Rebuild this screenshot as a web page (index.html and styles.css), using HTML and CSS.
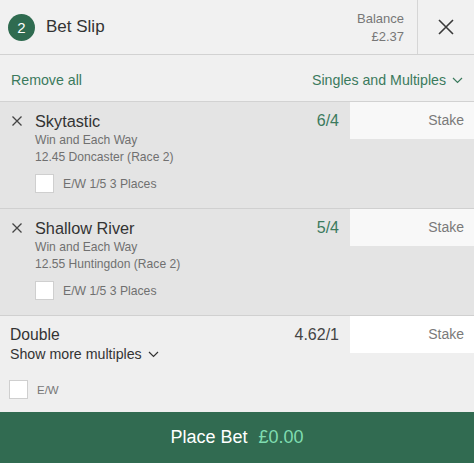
FILE: index.html
```html
<!DOCTYPE html>
<html lang="en">
<head>
  <meta charset="UTF-8">
  <title>Bet Slip</title>
  <meta name="viewport" content="width=device-width, initial-scale=1">
  <link rel="stylesheet" href="styles.css">
</head>
<body>
  <div class="slip">
    <div class="header">
      <div class="title">
        <span class="badge">2</span>
        <span class="title-text">Bet Slip</span>
      </div>
      <div class="balance">
        <span>Balance</span>
        <span>£2.37</span>
      </div>
      <div class="close">
        <svg width="16" height="16" viewBox="0 0 16 16"><path d="M1 1L15 15M15 1L1 15" stroke="#3a3a3a" stroke-width="1.6" fill="none"/></svg>
      </div>
    </div>

    <div class="toolbar">
      <span class="link">Remove all</span>
      <span class="link">Singles and Multiples
        <svg class="chev" width="11" height="7" viewBox="0 0 11 7"><path d="M1 1L5.5 5.5L10 1" stroke="currentColor" stroke-width="1.2" fill="none"/></svg>
      </span>
    </div>

    <div class="bet">
      <div class="remove">
        <svg width="10" height="10" viewBox="0 0 10 10"><path d="M0.5 0.5L9.5 9.5M9.5 0.5L0.5 9.5" stroke="#444" stroke-width="1.3" fill="none"/></svg>
      </div>
      <div class="info">
        <div class="name">Skytastic</div>
        <div class="sub">Win and Each Way</div>
        <div class="sub">12.45 Doncaster (Race 2)</div>
        <div class="ew"><span class="box"></span>E/W&nbsp;1/5&nbsp;3 Places</div>
      </div>
      <div class="odds green">6/4</div>
      <div class="stake">Stake</div>
    </div>

    <div class="bet">
      <div class="remove">
        <svg width="10" height="10" viewBox="0 0 10 10"><path d="M0.5 0.5L9.5 9.5M9.5 0.5L0.5 9.5" stroke="#444" stroke-width="1.3" fill="none"/></svg>
      </div>
      <div class="info">
        <div class="name">Shallow River</div>
        <div class="sub">Win and Each Way</div>
        <div class="sub">12.55 Huntingdon (Race 2)</div>
        <div class="ew"><span class="box"></span>E/W&nbsp;1/5&nbsp;3 Places</div>
      </div>
      <div class="odds green">5/4</div>
      <div class="stake">Stake</div>
    </div>

    <div class="multi">
      <div class="info">
        <div class="name">Double</div>
        <div class="more">Show more multiples
          <svg class="chev" width="11" height="7" viewBox="0 0 11 7"><path d="M1 1L5.5 5.5L10 1" stroke="currentColor" stroke-width="1.2" fill="none"/></svg>
        </div>
        <div class="ew small"><span class="box"></span>E/W</div>
      </div>
      <div class="odds">4.62/1</div>
      <div class="stake">Stake</div>
    </div>

    <div class="place">
      <span>Place Bet</span>
      <span class="amount">£0.00</span>
    </div>
  </div>
</body>
</html>
```

FILE: styles.css
```css
body {
  margin: 0;
  font-family: "Liberation Sans", Arial, sans-serif;
  background: #f0f0f0;
  color: #333;
  overflow: hidden;
}
.slip {
  width: 474px;
  height: 463px;
  display: flex;
  flex-direction: column;
}
.header {
  height: 54px;
  display: flex;
  align-items: stretch;
  background: #f1f1f1;
  border-bottom: 1px solid #d2d2d2;
}
.title {
  flex: 1;
  display: flex;
  align-items: center;
  padding-left: 8px;
}
.badge {
  width: 27px;
  height: 27px;
  border-radius: 50%;
  background: #2f6b50;
  color: #fff;
  font-size: 15px;
  display: flex;
  align-items: center;
  justify-content: center;
}
.title-text {
  font-size: 17px;
  margin-left: 11px;
  color: #333;
}
.balance {
  display: flex;
  flex-direction: column;
  align-items: flex-end;
  justify-content: center;
  gap: 3px;
  padding-right: 13px;
  font-size: 13px;
  color: #777;
}
.close {
  width: 56px;
  border-left: 1px solid #d6d6d6;
  display: flex;
  align-items: center;
  justify-content: center;
}
.toolbar {
  height: 46px;
  display: flex;
  align-items: center;
  justify-content: space-between;
  padding: 0 11px;
  border-bottom: 1px solid #d2d2d2;
}
.link {
  color: #3b7a5d;
  font-size: 14.2px;
  padding-top: 4px;
}
.chev {
  margin-left: 2px;
  vertical-align: 1px;
}
.bet {
  height: 106px;
  display: flex;
  background: #e4e4e4;
  border-bottom: 1px solid #d0d0d0;
}
.remove {
  width: 35px;
  padding: 14px 0 0 12px;
  box-sizing: border-box;
}
.remove svg {
  display: block;
}
.info {
  flex: 1;
  padding-top: 8px;
}
.name {
  font-size: 16.3px;
  line-height: 22px;
  color: #333;
}
.sub {
  font-size: 12.1px;
  line-height: 17px;
  color: #707070;
}
.ew {
  display: flex;
  align-items: center;
  margin-top: 8px;
  font-size: 12.2px;
  color: #707070;
}
.box {
  width: 17px;
  height: 17px;
  background: #fff;
  border: 1px solid #cfcfcf;
  margin-right: 9px;
}
.odds {
  font-size: 16px;
  line-height: 22px;
  padding-top: 8px;
  margin-right: 11px;
  color: #444;
}
.green {
  color: #3b7a5d;
}
.stake {
  width: 124px;
  height: 37px;
  box-sizing: border-box;
  background: #f8f8f8;
  color: #7a7a7a;
  font-size: 14px;
  text-align: right;
  padding: 10px 10px 0 0;
}
.multi {
  height: 96px;
  display: flex;
  background: #efefef;
}
.multi .info {
  padding-left: 10px;
}
.multi .name {
  font-size: 15.7px;
}
.multi .stake {
  background: #fff;
}
.more {
  font-size: 14.2px;
  line-height: 16px;
  color: #333;
}
.ew.small {
  margin-top: 18px;
  font-size: 11.5px;
  color: #777;
}
.ew.small .box {
  margin-left: -1px;
}
.place {
  height: 51px;
  background: #316b51;
  color: #fff;
  font-size: 18px;
  display: flex;
  align-items: center;
  justify-content: center;
  gap: 11px;
}
.amount {
  color: #7fdcb0;
}
```
